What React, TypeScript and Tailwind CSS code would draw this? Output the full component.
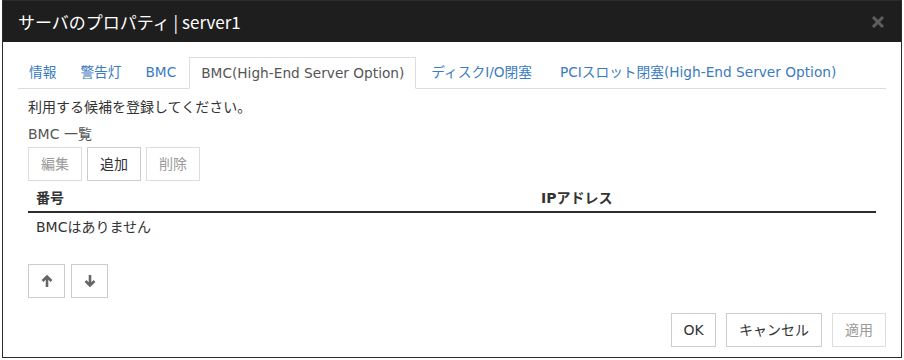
import React from "react";

const tabs = [
  "情報",
  "警告灯",
  "BMC",
  "BMC(High-End Server Option)",
  "ディスクI/O閉塞",
  "PCIスロット閉塞(High-End Server Option)",
];

const font = "font-['DejaVu_Sans','Noto_Sans_CJK_JP',sans-serif]";

const Btn = ({
  label,
  disabled,
  className = "",
}: {
  label: React.ReactNode;
  disabled?: boolean;
  className?: string;
}) => (
  <button
    className={
      "h-[34px] flex items-center justify-center border bg-white text-[14px] " +
      (disabled ? "border-[#dddddd] text-[#9a9a9a] " : "border-[#cccccc] text-[#333333] ") +
      className
    }
  >
    {label}
  </button>
);

const Arrow = ({ down }: { down?: boolean }) => (
  <svg width="14" height="14" viewBox="0 0 14 14" className={down ? "rotate-180" : ""}>
    <path d="M7 13V2.5M2.5 7l4.5-4.5 4.5 4.5" fill="none" stroke="#666" strokeWidth="2.6" />
  </svg>
);

export default function App() {
  return (
    <div className={"w-[904px] h-[360px] bg-white " + font}>
      <div className="ml-[2px] w-[900px] h-[358px] border border-[#2b2b2b] flex flex-col">
        {/* Title */}
        <div className="h-[41px] shrink-0 bg-[#1e1e1e] flex items-center justify-between pl-[15px] pr-[16px]">
          <span className="text-white text-[17px] font-['Noto_Sans_CJK_JP',sans-serif]">
            サーバのプロパティ | server1
          </span>
          <svg width="14" height="14" viewBox="0 0 14 14">
            <path d="M2 2l10 10M12 2l-10 10" stroke="#5e5e5e" strokeWidth="3" />
          </svg>
        </div>

        {/* Body */}
        <div className="flex-1 flex flex-col px-[15px] pt-[15px] pb-[10px]">
          <div className="flex h-[32px] border-b border-[#dddddd]">
            {tabs.map((t, i) =>
              i === 3 ? (
                <div
                  key={t}
                  className="mr-[2px] -mb-px px-[11px] flex items-center border border-[#dddddd] border-b-white bg-white text-[13.7px] text-[#555555]"
                >
                  {t}
                </div>
              ) : (
                <div
                  key={t}
                  className={
                    "mr-[2px] flex items-center border border-transparent text-[13.7px] text-[#3a7bc0] " +
                    (i < 3 ? "px-[10px]" : "px-[12px]")
                  }
                >
                  {t}
                </div>
              )
            )}
          </div>

          <div className="px-[10px]">
            <p className="mt-[8px] leading-[20px] text-[14px] text-[#333333]">
              利用する候補を登録してください。
            </p>
            <p className="mt-[7px] leading-[20px] text-[14px] text-[#555555]">BMC 一覧</p>

            <div className="mt-[3px] flex gap-[5px]">
              <Btn label="編集" disabled className="w-[54px]" />
              <Btn label="追加" className="w-[54px]" />
              <Btn label="削除" disabled className="w-[54px]" />
            </div>

            <div className="mt-[2px] grid grid-cols-[513px_1fr] h-[30px] items-end pb-[3px] border-b-2 border-[#2b2b2b] text-[14px] font-bold text-[#333333]">
              <div className="pl-[8px] leading-[20px]">番号</div>
              <div className="leading-[20px]">IPアドレス</div>
            </div>
            <div className="pl-[8px] pt-[4px] leading-[20px] text-[14px] text-[#333333]">
              BMCはありません
            </div>

            <div className="mt-[27px] flex gap-[6px]">
              <Btn label={<Arrow />} className="w-[37px]" />
              <Btn label={<Arrow down />} className="w-[37px]" />
            </div>
          </div>

          <div className="mt-auto flex justify-end gap-[10px]">
            <Btn label="OK" className="w-[45px] h-[33px]" />
            <Btn label="キャンセル" className="w-[96px] h-[33px]" />
            <Btn label="適用" disabled className="w-[54px] h-[33px]" />
          </div>
        </div>
      </div>
    </div>
  );
}
